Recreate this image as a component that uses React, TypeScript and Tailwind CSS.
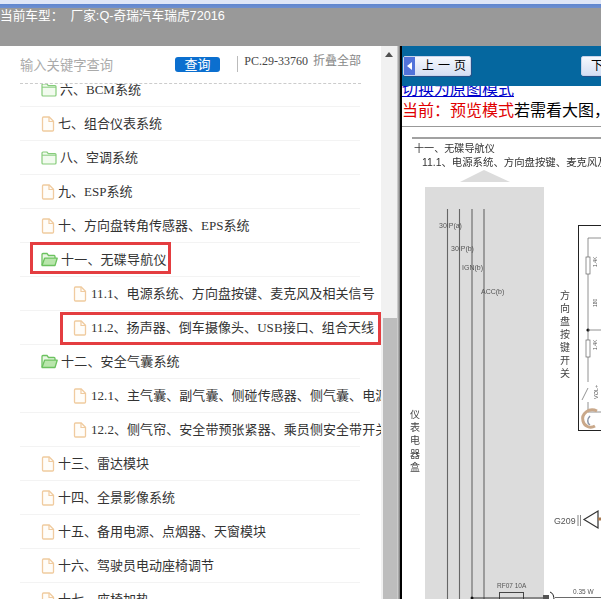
import React from "react";

const cjk = { fontFamily: '"Liberation Serif","Noto Sans CJK SC",serif' };
const sans = { fontFamily: '"Liberation Sans","Noto Sans CJK SC",sans-serif' };

function Folder({ open }: { open?: boolean }) {
  return open ? (
    <svg width="17" height="15" viewBox="0 0 17 15" className="shrink-0">
      <path d="M1 13V2.500C1 1.900 1.400 1.500 2 1.500h4l1.500 2H13c.6 0 1 .4 1 1V6" fill="#e9f7e4" stroke="#6cc25f" strokeWidth="1.3" />
      <path d="M1 13.500 3.600 6.200h12.600L14 13.500Z" fill="#b9e6ac" stroke="#6cc25f" strokeWidth="1.3" strokeLinejoin="round" />
    </svg>
  ) : (
    <svg width="16" height="14" viewBox="0 0 16 14" className="shrink-0">
      <path d="M1 2c0-.6.4-1 1-1h4l1.300 1.600H14c.6 0 1 .4 1 1V12c0 .6-.4 1-1 1H2c-.6 0-1-.4-1-1Z" fill="#f2fbef" stroke="#86cc7b" strokeWidth="1.2" />
      <path d="M1 4.200h14" stroke="#86cc7b" strokeWidth="1" />
    </svg>
  );
}

function FileIcon() {
  return (
    <svg width="14" height="16" viewBox="0 0 14 16" className="shrink-0">
      <path d="M1.500 2c0-.6.4-1 1-1h5.700l4.300 4.300V14c0 .6-.4 1-1 1h-9c-.6 0-1-.4-1-1Z" fill="#fffdf9" stroke="#f0cb9f" strokeWidth="1.3" />
      <path d="M8 1v4.500h4.500" fill="none" stroke="#f0cb9f" strokeWidth="1.2" />
    </svg>
  );
}

type Row = { t: string; kind: "folder" | "open" | "file"; sub?: boolean; box?: string };
const rows: Row[] = [
  { t: "六、BCM系统", kind: "folder" },
  { t: "七、组合仪表系统", kind: "file" },
  { t: "八、空调系统", kind: "folder" },
  { t: "九、ESP系统", kind: "file" },
  { t: "十、方向盘转角传感器、EPS系统", kind: "file" },
  { t: "十一、无碟导航仪", kind: "open", box: "-top-[1px] h-[32px] left-[10px] w-[141px]" },
  { t: "11.1、电源系统、方向盘按键、麦克风及相关信号", kind: "file", sub: true },
  { t: "11.2、扬声器、倒车摄像头、USB接口、组合天线", kind: "file", sub: true, box: "top-[1px] h-[33px] left-[40px] w-[321px]" },
  { t: "十二、安全气囊系统", kind: "open" },
  { t: "12.1、主气囊、副气囊、侧碰传感器、侧气囊、电源及信号", kind: "file", sub: true },
  { t: "12.2、侧气帘、安全带预张紧器、乘员侧安全带开关及指示", kind: "file", sub: true },
  { t: "十三、雷达模块", kind: "file" },
  { t: "十四、全景影像系统", kind: "file" },
  { t: "十五、备用电源、点烟器、天窗模块", kind: "file" },
  { t: "十六、驾驶员电动座椅调节", kind: "file" },
  { t: "十七、座椅加热", kind: "file" },
];

function TreeRow({ r, first }: { r: Row; first: boolean }) {
  return (
    <div className={`relative ml-[20px] mr-[21px] flex h-[34px] shrink-0 items-center border-b border-[#f3f3f3] whitespace-nowrap text-[13px] text-[#333] ${r.sub ? "gap-[4px] pl-[53px] tracking-[0.06px]" : "gap-[3px] pl-[21px]"} ${first ? "-mt-[11px]" : ""}`}>
      {r.kind === "file" ? <FileIcon /> : <Folder open={r.kind === "open"} />}
      <span className={r.kind === "open" ? "tracking-[0.2px]" : ""}>{r.t}</span>
      {r.box && <div className={`absolute border-[3px] border-[#e43d40] ${r.box}`} />}
    </div>
  );
}

function PageButton({ label, arrow }: { label: string; arrow?: boolean }) {
  return (
    <div className="flex h-[20px] w-[68px] shrink-0 items-center rounded-[2px] border border-[#c8d3ea] bg-gradient-to-b from-[#f6f8fd] to-[#d5dff3] text-[12px] text-black shadow-[1px_1px_0_#24528a]" style={cjk}>
      {arrow && (
        <span className="flex h-full w-[11px] items-center justify-center bg-[#5173da]">
          <span className="h-0 w-0 border-y-[4px] border-r-[5px] border-y-transparent border-r-white" />
        </span>
      )}
      <span className={arrow ? "ml-[7px] tracking-[4px]" : "ml-[9px] tracking-[4px]"}>{label}</span>
    </div>
  );
}

function Diagram() {
  return (
    <svg width="199" height="473" viewBox="402 126 199 473" className="block blur-[0.35px]" style={sans}>
      <rect x="402" y="126" width="199" height="473" fill="#fff" />
      <line x1="412" y1="137" x2="601" y2="137" stroke="#444" strokeWidth="1.2" />
      <text x="414" y="151" fontSize="10.100" fill="#333">十一、无碟导航仪</text>
      <text x="422" y="165" fontSize="10.400" fill="#333">11.1、电源系统、方向盘按键、麦克风及</text>
      <polygon points="460,181 484,169 510,181" fill="#dcdcdc" />
      <rect x="425" y="186" width="119" height="413" fill="#dcdcdc" />
      {[447.500, 459.500, 472, 484].map((x) => (
        <line key={x} x1={x} y1="208" x2={x} y2="599" stroke="#666" strokeWidth="1.1" />
      ))}
      <g fontSize="7" fill="#555">
        <text x="439" y="227">30IP(a)</text>
        <text x="451" y="250">30IP(b)</text>
        <text x="462" y="269">IGN(b)</text>
        <text x="481" y="293">ACC(b)</text>
      </g>
      <g fontSize="10" fill="#444" textAnchor="middle">
        {["方", "向", "盘", "按", "键", "开", "关"].map((c, i) => (
          <text key={c} x="565" y={298 + i * 13}>{c}</text>
        ))}
        {["仪", "表", "电", "器", "盒"].map((c, i) => (
          <text key={c} x="415" y={417 + i * 13.200}>{c}</text>
        ))}
      </g>
      <rect x="578.500" y="224.500" width="40" height="205" fill="#fff" stroke="#222" strokeWidth="1" />
      <path d="M588 247v-10h20M588 247v52M588 329v-30M588 329v52M588 387l-6 12M588 401v10h20" fill="none" stroke="#777" strokeWidth="0.8" />
      <rect x="586" y="256" width="4" height="17" fill="#fff" stroke="#666" strokeWidth="0.7" />
      <rect x="586" y="339" width="4" height="17" fill="#fff" stroke="#666" strokeWidth="0.7" />
      <circle cx="588" cy="329" r="1.600" fill="#111" />
      <line x1="588" y1="329" x2="601" y2="329" stroke="#777" strokeWidth="0.8" />
      <text x="0" y="0" fontSize="5.500" fill="#555" transform="translate(598 398) rotate(-90)">VOL+</text>
      <text x="0" y="0" fontSize="5" fill="#555" transform="translate(597 266) rotate(-90)">1.4K</text>
      <text x="0" y="0" fontSize="5" fill="#555" transform="translate(597 349) rotate(-90)">1.4K</text>
      <text x="0" y="0" fontSize="5" fill="#555" transform="translate(597 306) rotate(-90)">180</text>
      <path d="M597 410c-8-4-16 3-14 10 1 5 7 8 12 5" fill="none" stroke="#c9a88a" strokeWidth="3" />
      <path d="M590 415c-3 3-3 7 0 9" fill="none" stroke="#8a95a8" strokeWidth="1.500" />
      <text x="554" y="523" fontSize="8.800" fill="#555">G209</text>
      <path d="M578 514v11M580.500 514v11" stroke="#666" strokeWidth="0.8" />
      <path d="M598 510v17l-14-8.500Z" fill="#fff" stroke="#333" strokeWidth="1.200" />
      <line x1="598" y1="518" x2="601" y2="518" stroke="#a8794f" strokeWidth="3" />
      <text x="497" y="587" fontSize="6.500" fill="#555">RF07 10A</text>
      <rect x="499.500" y="591.500" width="24" height="14" fill="none" stroke="#444" strokeWidth="1" />
      <line x1="472" y1="597" x2="545" y2="597" stroke="#333" strokeWidth="1" />
      <circle cx="472" cy="597" r="1.500" fill="#111" />
      <rect x="543" y="594" width="6" height="6" fill="#555" />
      <path d="M550 591c3 1 4 4 4 8" fill="none" stroke="#222" strokeWidth="1" />
      <text x="573" y="593" fontSize="6.500" fill="#555">0.35 W</text>
      <line x1="555" y1="596.500" x2="601" y2="596.500" stroke="#444" strokeWidth="0.8" />
    </svg>
  );
}

export default function App() {
  return (
    <div className="flex h-[599px] w-[601px] flex-col overflow-hidden bg-white" style={sans}>
      <div className="h-[4px] shrink-0 bg-[#dfe6f7]" />
      <div className="h-[4px] shrink-0 bg-gradient-to-b from-[#5f86d0] to-[#6f8fce]" />
      <div className="h-[38px] shrink-0 bg-[#999999] pt-[1px] text-[12.700px] leading-[14px] whitespace-pre text-white">当前车型：  厂家:Q-奇瑞汽车瑞虎72016</div>
      <div className="flex min-h-0 flex-1">
        <div className="flex w-[381px] shrink-0 flex-col overflow-hidden">
          <div className="mx-[20px] flex h-[38px] shrink-0 whitespace-nowrap border-b border-dashed border-[#cccccc]">
            <span className="mt-[12px] w-[156px] text-[13.300px] leading-[16px] text-[#aaaaaa]" style={cjk}>输入关键字查询</span>
            <span className="mt-[11px] flex h-[15px] w-[46px] items-center justify-center rounded-[3px] bg-[#0b6fcf] text-[13px] text-white" style={cjk}>查询</span>
            <span className="mt-[10px] ml-[17px] h-[16px] w-px bg-[#bbbbbb]" />
            <span className="mt-[7px] ml-[6px] w-[64px] text-[12px] leading-[16px] text-[#444]" style={cjk}>PC.29-33760</span>
            <span className="mt-[7px] ml-[5px] text-[12px] leading-[16px] text-[#888]" style={cjk}>折叠全部</span>
          </div>
          <div className="flex min-h-0 flex-1 flex-col overflow-hidden" style={cjk}>
            {rows.map((r, i) => (
              <TreeRow key={r.t} r={r} first={i === 0} />
            ))}
          </div>
        </div>
        <div className="flex w-[16px] shrink-0 flex-col bg-[#f1f1f1]">
          <div className="ml-[4px] mt-[6px] h-0 w-0 border-x-[4px] border-b-[5px] border-x-transparent border-b-[#505050]" />
          <div className="ml-[2px] mt-[261px] flex-1 bg-[#bdbdbd]" />
        </div>
        <div className="w-[3px] shrink-0 bg-gradient-to-r from-[#dddddd] to-[#777777]" />
        <div className="min-w-0 flex-1 overflow-hidden border-l-2 border-black">
          <div className="flex h-[40px] items-center justify-between gap-[2px] bg-[#05679f] pl-[1px]">
            <PageButton label="上一页" arrow />
            <div className="mr-[-48px]">
              <PageButton label="下一页" />
            </div>
          </div>
          <div className="h-[40px] overflow-hidden whitespace-nowrap text-[16px] leading-[20px]" style={cjk}>
            <div className="-mt-[6px] w-fit text-[#0000cc] underline">切换为原图模式</div>
            <div className="mt-[1px]"><span className="text-[#e00000]">当前：预览模式</span><span className="text-black">若需看大图，请点击切换</span></div>
          </div>
          <div className="h-px bg-[#999]" />
          <Diagram />
        </div>
      </div>
    </div>
  );
}
